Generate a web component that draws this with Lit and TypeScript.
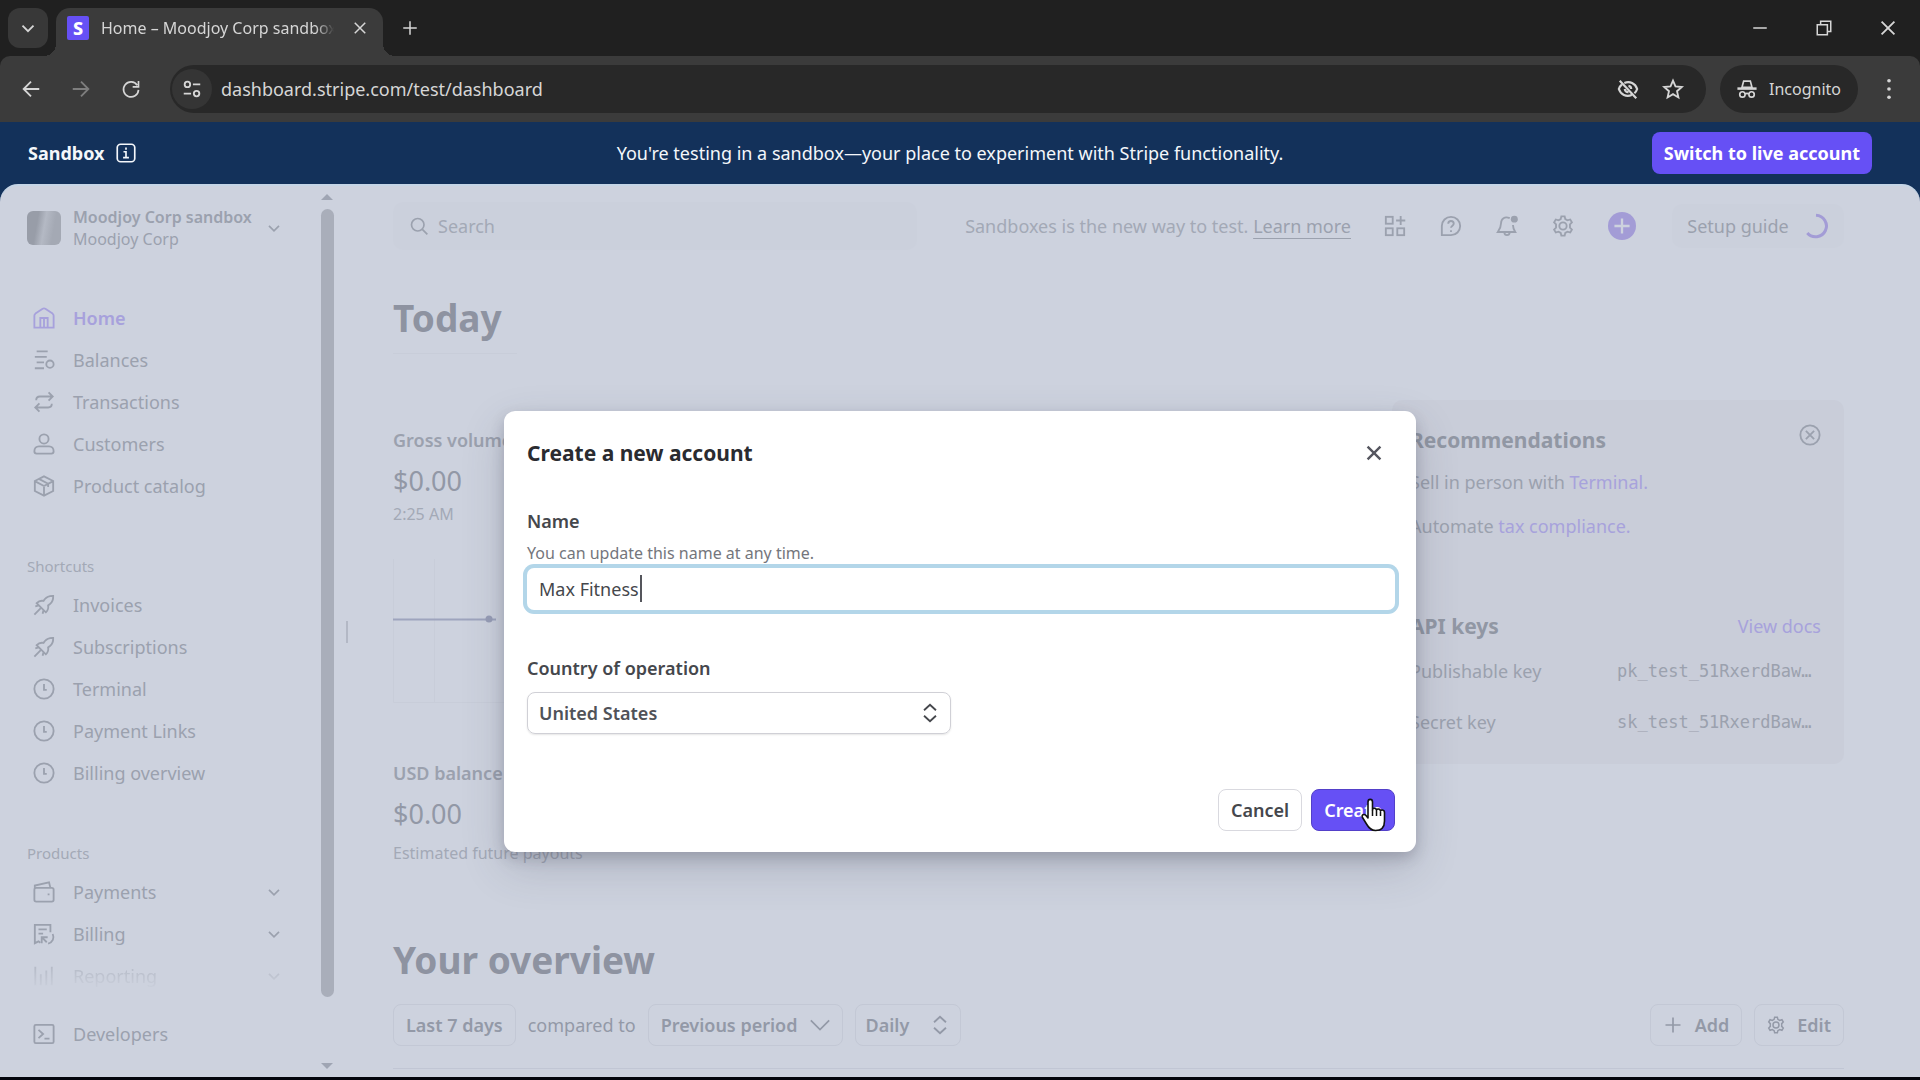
import { LitElement, html, css, svg } from "lit";
import { customElement } from "lit/decorators.js";
import { classMap } from "lit/directives/class-map.js";

const icons: Record<string, unknown> = {
  down: svg`<path d="M6 9.500l6 6 6-6"/>`,
  downWide: svg`<path d="M1 6.500l11 11 11-11"/>`,
  close: svg`<path d="M5 5l14 14M19 5L5 19"/>`,
  plus: svg`<path d="M12 3v18M3 12h18"/>`,
  minimize: svg`<path d="M3 12h18"/>`,
  restore: svg`<path d="M3 7.500h13.500V21H3zM7.500 7.500V3H21v13.500h-4.500"/>`,
  back: svg`<path d="M21 12H4M12 4l-8 8 8 8"/>`,
  forward: svg`<path d="M3 12h17M12 4l8 8-8 8"/>`,
  reload: svg`<path d="M19.500 7.500A9 9 0 1 0 21 13M21 2.500v7H14"/>`,
  site: svg`<circle cx="7" cy="7" r="3"/><path d="M13 7h8M3 17h8"/><circle cx="17" cy="17" r="3"/>`,
  eyeOff: svg`<path d="M3 3l18 19M8 5.500C14 3 20 6 22 12c-.6 1.800-1.600 3.400-3 4.600M16 18.500C10 21 4 18 2 12c.6-1.900 1.700-3.500 3.200-4.700M12.500 8.500a3.500 3.500 0 0 1 3 3.500M8.500 12a3.500 3.500 0 0 0 4 3.400" stroke-width="2.400"/>`,
  star: svg`<path d="M12 2.800l2.700 6.400 6.900.6-5.200 4.600 1.500 6.800-5.900-3.600-5.900 3.600 1.500-6.800-5.200-4.600 6.900-.6z"/>`,
  incognito: svg`<path d="M0.500 11.500h23" stroke-width="3"/><path d="M6 10L8 2.500h8l2 7.500z"/><circle cx="6.500" cy="18.500" r="3.200"/><circle cx="17.500" cy="18.500" r="3.200"/><path d="M9.700 18c1.200-.9 3.400-.9 4.600 0"/>`,
  dots: svg`<g fill="currentColor" stroke="none"><circle cx="12" cy="3" r="2"/><circle cx="12" cy="12" r="2"/><circle cx="12" cy="21" r="2"/></g>`,
  info: svg`<rect x="1.500" y="1.500" width="21" height="21" rx="4"/><path d="M9 10.500h3V17M8.500 17.500h7M12 5.500v2.500"/>`,
  search: svg`<circle cx="10.500" cy="10.500" r="7.500"/><path d="M16 16l6 6"/>`,
  home: svg`<path d="M1.500 22.500V9.500C1.500 8.500 2 7.800 2.700 7.200L10.500 2c.9-.6 2.100-.6 3 0l7.800 5.200c.7.600 1.200 1.300 1.200 2.300v13z"/><path d="M8 22V12h8v10M12 13v9"/>`,
  balances: svg`<path d="M4 2.500h12M2 8.500h13M4 14.500h8M2 21h10"/><circle cx="18.500" cy="16.500" r="4"/>`,
  swap: svg`<path d="M17 1.500l4.500 4.500L17 10.500M21 6H7.500C5 6 3.500 7.500 3.500 10M7 13.500L2.500 18 7 22.500M3 18h13.500c2.500 0 4-1.500 4-4"/>`,
  person: svg`<circle cx="12" cy="6.500" r="5"/><path d="M1.500 20c0-3.200 2-5.500 5-5.500h11c3 0 5 2.300 5 5.500 0 1.500-1 2.500-2.500 2.500H4C2.500 22.500 1.500 21.500 1.500 20z"/>`,
  box: svg`<path d="M12 1.500l10 5v11l-10 5-10-5v-11zM2.500 7L12 12l9.500-5M12 12v10.500M7 4.500l9.500 5V13"/>`,
  pin: svg`<path d="M13 5.500C15 3 18.500 1.800 22 2c.2 3.500-1 7-3.500 9l-2 1.500c.6 3-.3 5.500-2.500 7.500L4 10c2-2.200 4.500-3.100 7.500-2.500zM8.500 15.500L1.500 22.500M6.500 12.500l-4 1M11.500 17.500l-1 4"/>`,
  clock: svg`<circle cx="12" cy="12" r="10.500"/><path d="M12 6.500V13h3"/>`,
  wallet: svg`<rect x="1.500" y="7.500" width="21" height="15" rx="2"/><path d="M2 7.500V5l15.500-3.500 1.500 6M16 14.500h2"/>`,
  billing: svg`<path d="M19 10V2H2v20l4-2 2 1.500M6 7h9M6 11.500h5"/><path d="M9.500 22v-6.500H16M10 16l5 5M21.500 12c2 4.500 0 9-5 10.500"/>`,
  chart: svg`<path d="M2.500 2v20M8.500 10v12M14.500 6v16M20.500 2v20"/>`,
  terminal: svg`<rect x="1.500" y="2" width="21" height="20" rx="1.500"/><path d="M6 7.500l5 4.500-5 4.500M12.500 17H18"/>`,
  apps: svg`<rect x="2" y="2" width="7.500" height="7.500"/><rect x="2" y="14.500" width="7.500" height="7.500"/><rect x="14.500" y="14.500" width="7.500" height="7.500"/><path d="M18.200 1v10M13.200 6h10"/>`,
  help: svg`<path d="M2 22V12A10 10 0 1 1 12 22z"/><path d="M9 9.500c0-4 6-4 6 0 0 2-3 2.300-3 4.500M12 16.500v2"/>`,
  bell: svg`<path d="M15 3.500C9.500 1 5.500 4 5.500 9c0 4-1 6-3.500 9.500h19C19 15.500 18.500 13 18.500 11"/><path d="M9 19c.5 4 5.500 4 6 0"/><circle cx="20" cy="4.500" r="3.800" fill="currentColor" stroke="none"/>`,
  gear: svg`<path d="M10.200 1.500h3.600l.7 3 2.400 1.300 3-.9 1.800 3.100-2.100 2.200v3.600l2.100 2.200-1.800 3.100-3-.9-2.400 1.300-.7 3h-3.600l-.7-3-2.400-1.300-3 .9L2.300 16l2.100-2.200v-3.600L2.300 8l1.800-3.100 3 .9 2.400-1.300z"/><circle cx="12" cy="12" r="4"/>`,
  addFilled: svg`<circle cx="12" cy="12" r="12" fill="currentColor" stroke="none"/><path d="M12 5.500v13M5.500 12h13" stroke="#cdd2de"/>`,
  ring: svg`<path d="M12 2A10 10 0 1 1 4 18.500" stroke-width="2.800"/>`,
  circleX: svg`<circle cx="12" cy="12" r="10.500"/><path d="M7.500 7.500l9 9M16.500 7.500l-9 9"/>`,
  updown: svg`<path d="M5.500 9L12 3l6.500 6M5.500 15l6.500 6 6.500-6"/>`,
};

const icon = (name: string, cls = "") =>
  html`<svg class="icon ${cls}" viewBox="0 0 24 24" aria-hidden="true">${icons[name]}</svg>`;

const base = css`
  * { box-sizing: border-box; margin: 0; }
  button, input, select { font: inherit; color: inherit; }
  button { border: 0; padding: 0; background: none; display: inline-flex; align-items: center; justify-content: center; white-space: nowrap; }
  a { color: inherit; text-decoration: none; }
  .icon { width: 22px; height: 22px; flex: none; display: block; fill: none; stroke: currentColor; stroke-width: 2; overflow: visible; }
  .icon.sm { width: 18px; height: 18px; }
  .icon.md { width: 20px; height: 20px; }
  .icon.lg { width: 28px; height: 28px; }
`;

@customElement("browser-bar")
class BrowserBar extends LitElement {
  static styles = [base, css`
    :host { display: block; background: #202020; color: #d6d6d6; }
    .strip { display: flex; height: 56px; padding: 8px 0 0 8px; }
    .list { width: 40px; height: 40px; border-radius: 12px; background: #383838; margin-right: 8px; }
    .tab { position: relative; display: flex; align-items: center; width: 327px; height: 48px; padding: 0 14px 8px 11px; border-radius: 14px 14px 0 0; background: #3b3b3b; }
    .tab::before, .tab::after { content: ""; position: absolute; bottom: 0; width: 12px; height: 12px; }
    .tab::before { left: -12px; background: radial-gradient(circle at 0 0, transparent 12px, #3b3b3b 12px); }
    .tab::after { right: -12px; background: radial-gradient(circle at 100% 0, transparent 12px, #3b3b3b 12px); }
    .logo { width: 22px; height: 24px; margin-right: 12px; display: grid; place-items: center; background: #6650f5; color: #fff; font-size: 18px; line-height: 24px; font-weight: 800; border-radius: 2px; }
    .title { flex: 1; min-width: 0; overflow: hidden; white-space: nowrap; font-size: 16px; line-height: 24px; -webkit-mask-image: linear-gradient(90deg, #000 90%, transparent 98%); mask-image: linear-gradient(90deg, #000 90%, transparent 98%); }
    .tab button { margin-left: 12px; }
    .new { width: 54px; height: 40px; }
    .window { display: flex; margin-left: auto; height: 40px; }
    .window button { width: 64px; }
    .tools { display: flex; align-items: center; height: 66px; background: #3b3b3b; border-radius: 10px 10px 0 0; padding: 0 8px 0 6px; }
    .nav { width: 50px; height: 40px; }
    .off { color: #7e7e7e; }
    .address { flex: 1; min-width: 0; display: flex; align-items: center; height: 48px; border-radius: 24px; background: #282828; margin: 0 14px 0 14px; padding: 0 22px 0 2px; gap: 23px; }
    .site { width: 40px; height: 40px; border-radius: 20px; background: #353535; }
    .address input { flex: 1; min-width: 0; border: 0; outline: 0; padding: 0; background: none; font-size: 18px; line-height: 24px; margin-left: -14px; }
    .mode { display: flex; align-items: center; gap: 12px; height: 48px; width: 138px; justify-content: center; border-radius: 24px; background: #282828; font-size: 16px; }
    .menu { width: 46px; height: 40px; margin-left: 8px; }
  `];
  render() {
    return html`
      <div class="strip">
        <button class="list" aria-label="Search tabs">${icon("down")}</button>
        <div class="tab">
          <span class="logo">S</span>
          <span class="title">Home – Moodjoy Corp sandbox</span>
          <button aria-label="Close tab">${icon("close", "sm")}</button>
        </div>
        <button class="new" aria-label="New tab">${icon("plus", "sm")}</button>
        <div class="window">
          <button aria-label="Minimize">${icon("minimize", "sm")}</button>
          <button aria-label="Restore">${icon("restore", "sm")}</button>
          <button aria-label="Close">${icon("close")}</button>
        </div>
      </div>
      <div class="tools">
        <button class="nav" aria-label="Back">${icon("back")}</button>
        <button class="nav off" aria-label="Forward">${icon("forward")}</button>
        <button class="nav" aria-label="Reload">${icon("reload", "md")}</button>
        <div class="address">
          <button class="site" aria-label="Site information">${icon("site")}</button>
          <input aria-label="Address" value="dashboard.stripe.com/test/dashboard" />
          <button aria-label="Third-party cookies blocked">${icon("eyeOff")}</button>
          <button aria-label="Bookmark">${icon("star")}</button>
        </div>
        <button class="mode">${icon("incognito", "md")}Incognito</button>
        <button class="menu" aria-label="Menu">${icon("dots")}</button>
      </div>`;
  }
}

type Item = { icon: string; label: string; active?: boolean; more?: boolean; faded?: boolean };
const mainItems: Item[] = [
  { icon: "home", label: "Home", active: true },
  { icon: "balances", label: "Balances" },
  { icon: "swap", label: "Transactions" },
  { icon: "person", label: "Customers" },
  { icon: "box", label: "Product catalog" },
];
const shortcuts: Item[] = [
  { icon: "pin", label: "Invoices" },
  { icon: "pin", label: "Subscriptions" },
  { icon: "clock", label: "Terminal" },
  { icon: "clock", label: "Payment Links" },
  { icon: "clock", label: "Billing overview" },
];
const products: Item[] = [
  { icon: "wallet", label: "Payments", more: true },
  { icon: "billing", label: "Billing", more: true },
  { icon: "chart", label: "Reporting", more: true, faded: true },
];

@customElement("side-nav")
class SideNav extends LitElement {
  static styles = [base, css`
    :host { display: flex; width: 334px; flex: none; color: #9ba1ae; }
    nav { flex: 1; min-width: 0; padding: 20px 36px 0 27px; font-size: 18px; line-height: 24px; }
    .account { display: flex; width: 100%; text-align: left; margin-bottom: 47px; line-height: 22px; font-size: 16px; }
    .avatar { width: 34px; height: 34px; border-radius: 6px; background: linear-gradient(100deg, #989da8 30%, #b4b9c4 50%, #a4a9b4 75%); margin-right: 12px; }
    .names { flex: 1; }
    .names strong { display: block; font-weight: 600; }
    .item { display: flex; align-items: center; gap: 18px; height: 42px; padding-left: 6px; }
    .item span { flex: 1; }
    .active { color: #a7a1dc; font-weight: 600; }
    .faded { -webkit-mask-image: linear-gradient(#000, transparent 85%); mask-image: linear-gradient(#000, transparent 85%); opacity: 0.7; }
    h2 { font-size: 15px; line-height: 22px; font-weight: 400; color: #a3a9b6; }
    .shortcuts, .products { margin-top: 48px; }
    .list { margin-top: 7px; }
    .dev { margin-top: 16px; }
    .bar { width: 14px; display: flex; flex-direction: column; align-items: center; justify-content: space-between; padding: 8px 0; color: #9fa5b3; }
    .arrow { width: 12px; height: 6px; background: currentColor; clip-path: polygon(50% 0, 100% 100%, 0 100%); }
    .arrow.bottom { clip-path: polygon(0 0, 100% 0, 50% 100%); }
    .thumb { flex: 1; width: 13px; margin: 9px 0 66px; border-radius: 7px; background: #a9aeba; }
  `];
  item(i: Item) {
    return html`<a href="#" class=${classMap({ item: true, active: !!i.active, faded: !!i.faded })}>
      ${icon(i.icon)}<span>${i.label}</span>${i.more ? icon("down", "md") : ""}</a>`;
  }
  render() {
    return html`
      <nav>
        <button class="account">
          <div class="avatar"></div>
          <div class="names"><strong>Moodjoy Corp sandbox</strong>Moodjoy Corp</div>
          ${icon("down", "md")}
        </button>
        ${mainItems.map((i) => this.item(i))}
        <h2 class="shortcuts">Shortcuts</h2>
        <div class="list">${shortcuts.map((i) => this.item(i))}</div>
        <h2 class="products">Products</h2>
        <div class="list">${products.map((i) => this.item(i))}</div>
        <div class="dev">${this.item({ icon: "terminal", label: "Developers" })}</div>
      </nav>
      <div class="bar"><div class="arrow"></div><div class="thumb"></div><div class="arrow bottom"></div></div>`;
  }
}

@customElement("dash-main")
class DashMain extends LitElement {
  static styles = [base, css`
    :host { display: block; flex: 1; min-width: 0; padding: 16px 76px 0 33px; color: #9ba1ae; font-size: 18px; line-height: 24px; }
    .top { display: flex; align-items: center; height: 48px; }
    .search { display: flex; align-items: center; gap: 9px; width: 524px; height: 48px; padding: 0 16px; border-radius: 10px; background: #cbd0dc; }
    .search input { flex: 1; min-width: 0; border: 0; padding: 0; background: none; outline: 0; }
    .search input::placeholder { color: #a3a9b6; opacity: 1; }
    .note { margin-left: auto; margin-right: 33px; color: #a3a9b6; white-space: nowrap; }
    .note a { color: #9ba1ae; text-decoration: underline; text-underline-offset: 5px; }
    .actions { display: flex; align-items: center; gap: 34px; }
    .add { color: #a39cd6; }
    .setup { gap: 14px; height: 44px; width: 172px; margin-left: 36px; border-radius: 10px; background: #cbd0dc; }
    .setup .icon { color: #a39cd6; width: 26px; height: 26px; }
    h1 { font-size: 37px; line-height: 44px; font-weight: 700; color: #8e93a1; }
    .today { margin-top: 46px; padding-bottom: 13px; border-bottom: 1px solid #c8cdd9; width: 124px; }
    .grid { display: grid; grid-template-columns: minmax(0, 1fr) 452px; align-items: start; margin-top: 46px; }
    .stats { padding-top: 28px; }
    h3 { font-size: 18px; line-height: 24px; font-weight: 600; }
    .amount { font-size: 27px; line-height: 32px; margin-top: 13px; color: #9298a6; }
    .small { font-size: 16px; line-height: 24px; margin-top: 5px; color: #a3a9b6; }
    .payouts { font-size: 16px; line-height: 24px; margin-top: 11px; color: #a3a9b6; }
    .chart { display: block; width: 300px; height: 144px; margin: 33px 0 58px; }
    .panel { background: #c9cdd9; border-radius: 10px; height: 364px; padding: 24px 23px 0 18px; }
    .head { display: flex; justify-content: space-between; align-items: flex-start; }
    h2 { font-size: 21px; line-height: 24px; font-weight: 700; color: #9197a4; padding-top: 4px; }
    .panel p { margin-top: 18px; }
    .panel p + p { margin-top: 20px; }
    .panel a { color: #a7a2dc; }
    .api { align-items: flex-end; margin-top: 72px; }
    dl { display: grid; grid-template-columns: 207px 1fr; row-gap: 27px; margin-top: 21px; }
    dd { font-family: "DejaVu Sans Mono", monospace; font-size: 17px; white-space: nowrap; }
    .over { margin-top: 73px; }
    .filters { display: flex; align-items: center; gap: 12px; margin-top: 22px; padding-bottom: 22px; border-bottom: 1px solid #c1c6d4; color: #9399a7; }
    .btn { height: 42px; padding: 0 12px; gap: 12px; border: 1px solid #c3c8d5; border-radius: 8px; font-weight: 600; font-size: 18px; }
    .btn select { grid-area: 1 / 1; width: 100%; height: 100%; border: 0; background: none; appearance: none; padding: 0 10px; }
    .pick { display: grid; align-items: center; width: 106px; padding: 0; }
    .pick .icon { grid-area: 1 / 1; justify-self: end; margin-right: 9px; pointer-events: none; }
    .space { flex: 1; }
  `];
  render() {
    return html`
      <header class="top">
        <label class="search">${icon("search", "md")}<input placeholder="Search" aria-label="Search" /></label>
        <p class="note">Sandboxes is the new way to test. <a href="#">Learn more</a></p>
        <div class="actions">
          <button aria-label="Apps">${icon("apps")}</button>
          <button aria-label="Help">${icon("help")}</button>
          <button aria-label="Notifications">${icon("bell")}</button>
          <button aria-label="Settings">${icon("gear")}</button>
          <button class="add" aria-label="Create">${icon("addFilled", "lg")}</button>
        </div>
        <button class="setup">Setup guide${icon("ring")}</button>
      </header>
      <h1 class="today">Today</h1>
      <div class="grid">
        <section class="stats">
          <h3>Gross volume</h3>
          <p class="amount">$0.00</p>
          <p class="small">2:25 AM</p>
          <svg class="chart" viewBox="0 0 300 144" aria-hidden="true">
            <path d="M0.500 0V143.500H300M41.500 0V143" fill="none" stroke="#c8cdd9" />
            <path d="M0 60.500H103" stroke="#9ea4bd" stroke-width="2" />
            <circle cx="96" cy="60" r="3.500" fill="#979db6" />
          </svg>
          <h3>USD balance</h3>
          <p class="amount">$0.00</p>
          <p class="payouts">Estimated future payouts</p>
        </section>
        <aside class="panel">
          <div class="head"><h2>Recommendations</h2><button aria-label="Dismiss">${icon("circleX")}</button></div>
          <p>Sell in person with <a href="#">Terminal.</a></p>
          <p>Automate <a href="#">tax compliance.</a></p>
          <div class="head api"><h2>API keys</h2><a href="#">View docs</a></div>
          <dl>
            <dt>Publishable key</dt><dd>pk_test_51RxerdBaw…</dd>
            <dt>Secret key</dt><dd>sk_test_51RxerdBaw…</dd>
          </dl>
        </aside>
      </div>
      <h1 class="over">Your overview</h1>
      <div class="filters">
        <button class="btn">Last 7 days</button>
        <span>compared to</span>
        <button class="btn">Previous period${icon("downWide", "md")}</button>
        <div class="btn pick"><select aria-label="Interval"><option>Daily</option></select>${icon("updown")}</div>
        <div class="space"></div>
        <button class="btn">${icon("plus", "md")}Add</button>
        <button class="btn">${icon("gear", "sm")}Edit</button>
      </div>`;
  }
}

@customElement("account-dialog")
class AccountDialog extends LitElement {
  static styles = [base, css`
    :host { display: block; width: 912px; max-width: 90%; padding: 22px 21px 21px 23px; border-radius: 11px; background: #fff; color: #45474c; font-size: 18px; line-height: 24px; box-shadow: 0 6px 14px rgba(60, 60, 75, 0.24), 0 16px 44px rgba(60, 66, 87, 0.2); }
    .head { display: flex; justify-content: space-between; align-items: center; height: 40px; padding-right: 10px; }
    h2 { font-size: 21px; line-height: 28px; font-weight: 700; color: #2a2b30; }
    .head .icon { stroke-width: 2.600; color: #55565f; }
    label { display: block; font-weight: 600; }
    .name { margin-top: 36px; }
    .help { font-size: 16px; line-height: 24px; margin-top: 8px; color: #74767c; }
    .field { position: relative; }
    .field input { display: block; width: 100%; height: 42px; padding: 0 12px; border: 0; border-radius: 7px; outline: 0; background: #fff; box-shadow: 0 0 0 4px #b3d6e9; margin-top: 3px; }
    .caret { position: absolute; left: 113px; top: 7px; width: 2px; height: 27px; background: #55565c; }
    .country { margin-top: 46px; }
    .pick { display: grid; align-items: center; width: 424px; height: 42px; margin-top: 12px; border: 1px solid #d0d0d6; border-radius: 8px; box-shadow: 0 1px 2px rgba(0, 0, 0, 0.1); }
    .pick select { grid-area: 1 / 1; width: 100%; height: 40px; border: 0; background: none; appearance: none; padding: 0 11px; font-weight: 600; color: #505258; }
    .pick .icon { grid-area: 1 / 1; justify-self: end; margin-right: 9px; pointer-events: none; }
    .foot { display: flex; justify-content: flex-end; gap: 9px; margin-top: 55px; font-weight: 600; }
    .foot button { height: 42px; padding: 0 12px; border-radius: 8px; border: 1px solid #d9d9df; background: #fff; }
    .create { position: relative; }
    .foot .go { background: #6650f5; border-color: #5340c9; color: #fff; }
    .hand { position: absolute; left: 49px; top: 9px; width: 27px; height: 34px; }
  `];
  render() {
    return html`
      <div class="head"><h2>Create a new account</h2><button aria-label="Close">${icon("close")}</button></div>
      <label class="name" for="name">Name</label>
      <p class="help">You can update this name at any time.</p>
      <div class="field"><input id="name" value="Max Fitness" /><i class="caret"></i></div>
      <label class="country" for="country">Country of operation</label>
      <div class="pick"><select id="country"><option>United States</option></select>${icon("updown")}</div>
      <div class="foot">
        <button>Cancel</button>
        <div class="create">
          <button class="go">Create</button>
          <svg class="hand" viewBox="0 0 27 34" aria-hidden="true">
            <path d="M8 20V4c0-3.500 4.500-3.500 4.500 0v8c0-2.500 4-2.300 4 .5 0-2.300 4-2 4 .8 0-2 4-1.800 4 1.200V23c0 6-3 9.500-9 9.500-5 0-7-3-9-6.500l-4-6.500c-1.500-2.500 1.500-4 3.500-2z" fill="#fff" stroke="#111" stroke-width="1.600" stroke-linejoin="round" />
            <path d="M12.500 12v6M16.500 13v5M20.500 14v4" stroke="#111" stroke-width="1.500" />
          </svg>
        </div>
      </div>`;
  }
}

@customElement("app-root")
class AppRoot extends LitElement {
  static styles = [base, css`
    :host { display: flex; flex-direction: column; min-height: 100vh; box-sizing: border-box; background: #13315a; border-bottom: 3px solid #04060d; font-family: "Noto Sans", "Open Sans", sans-serif; overflow: hidden; }
    .banner { display: grid; grid-template-columns: 1fr auto 1fr; align-items: center; height: 62px; padding: 0 48px 0 28px; color: #f4f7fb; font-size: 18px; line-height: 24px; }
    .mode { display: flex; align-items: center; gap: 12px; font-weight: 700; }
    .live { justify-self: end; height: 42px; padding: 0 12px; border-radius: 8px; background: #6650f5; color: #fff; font-weight: 700; }
    .work { position: relative; flex: 1; display: flex; background: #cdd2de; border-top: 2px solid #c5d5e6; border-radius: 18px 18px 0 0; }
    .handle { width: 26px; flex: none; display: flex; align-items: center; justify-content: center; }
    .handle i { width: 2px; height: 22px; background: #b3b8c5; }
    .overlay { position: absolute; inset: 0; display: grid; place-items: center; }
  `];
  render() {
    return html`
      <browser-bar></browser-bar>
      <div class="banner">
        <div class="mode">Sandbox ${icon("info", "md")}</div>
        <p>You're testing in a sandbox—your place to experiment with Stripe functionality.</p>
        <button class="live">Switch to live account</button>
      </div>
      <div class="work">
        <side-nav></side-nav>
        <div class="handle"><i></i></div>
        <dash-main></dash-main>
        <div class="overlay"><account-dialog></account-dialog></div>
      </div>`;
  }
}
